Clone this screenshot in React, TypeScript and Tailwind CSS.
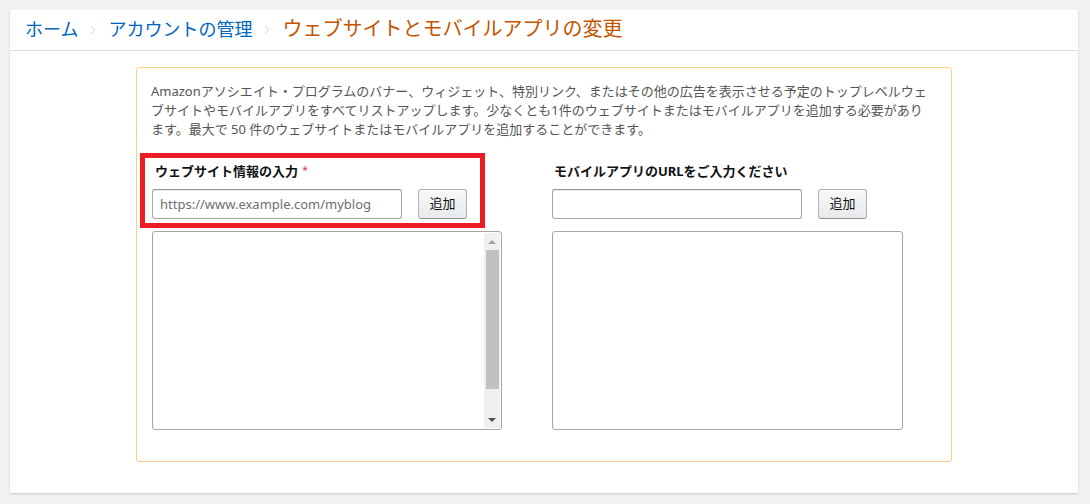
import { ChevronRight } from 'lucide-react';

const font = { fontFamily: '"Noto Sans", "Noto Sans CJK JP", sans-serif' };

const crumbs = ['ホーム', 'アカウントの管理'];

function AddRow({ placeholder }: { placeholder?: string }) {
  return (
    <div className="flex items-center gap-4 h-[30px]">
      <input
        type="text"
        placeholder={placeholder}
        className="w-[250px] h-[30px] rounded-[3px] border border-[#a6a6a6] border-t-[#949494] px-[7px] text-[13px] text-[#111] placeholder:text-[#6f6f6f] shadow-[inset_0_1px_0_rgba(0,0,0,0.07)] outline-none"
      />
      <button className="w-[49px] h-[30px] rounded-[3px] border border-[#adb1b8] border-b-[#8d9096] bg-gradient-to-b from-[#f7f8fa] to-[#e7e9ec] text-[13px] text-[#111]">
        追加
      </button>
    </div>
  );
}

export default function App() {
  return (
    <div className="min-h-[504px] bg-[#f2f2f2] pt-[10px] pl-[10px]" style={font}>
      <div className="w-[1068px] h-[483px] bg-white shadow-[0_1px_2px_rgba(0,0,0,0.18)] flex flex-col">
        {/* Breadcrumb */}
        <div className="h-[41px] border-b border-[#dddddd] flex items-center pl-[15px] pb-[2px]">
          {crumbs.map((c) => (
            <div key={c} className="flex items-center">
              <span className="text-[18px] leading-none text-[#0066c0]">{c}</span>
              <ChevronRight size={14} strokeWidth={1.5} className="text-[#cccccc] mx-[8px] mt-[2px]" />
            </div>
          ))}
          <span className="text-[20px] leading-none text-[#c45500]">ウェブサイトとモバイルアプリの変更</span>
        </div>

        {/* Body */}
        <div className="pl-[126px] pt-[16px]">
          <div className="relative w-[816px] h-[395px] border border-[#f9cf80] rounded-[3px] pt-[14px] px-[14px]">
            <p className="text-[13px] leading-[19px] text-[#555555] whitespace-nowrap">
              Amazonアソシエイト・プログラムのバナー、ウィジェット、特別リンク、またはその他の広告を表示させる予定のトップレベルウェ
              <br />
              ブサイトやモバイルアプリをすべてリストアップします。少なくとも1件のウェブサイトまたはモバイルアプリを追加する必要があり
              <br />
              ます。最大で 50 件のウェブサイトまたはモバイルアプリを追加することができます。
            </p>

            <div className="flex gap-[50px] mt-[23px] pl-[1px]">
              {/* Website column */}
              <div className="w-[350px]">
                <div className="h-[19px] pl-[3px] text-[13px] leading-[19px] font-bold text-[#111] mb-[8px] flex items-start gap-[4px]">
                  <span>ウェブサイト情報の入力</span>
                  <span className="text-[11px] leading-[16px] font-normal text-[#e0404a]">*</span>
                </div>
                <AddRow placeholder="https://www.example.com/myblog" />
                <div className="mt-[12px] h-[199px] rounded-[3px] border border-[#a6a6a6] flex justify-end p-[1px]">
                  <div className="w-[16px] bg-[#f0f0f0] flex flex-col items-center">
                    <div className="h-[17px] flex items-center justify-center">
                      <span className="block w-0 h-0 border-x-[4px] border-x-transparent border-b-[4px] border-b-[#a3a3a3]" />
                    </div>
                    <div className="w-[13px] h-[139px] bg-[#c1c1c1]" />
                    <div className="flex-1 flex items-end justify-center pb-[6px]">
                      <span className="block w-0 h-0 border-x-[4px] border-x-transparent border-t-[4px] border-t-[#505050]" />
                    </div>
                  </div>
                </div>
              </div>

              {/* Mobile app column */}
              <div className="w-[351px]">
                <div className="h-[19px] pl-[2px] text-[13px] leading-[19px] font-bold text-[#111] mb-[8px]">
                  モバイルアプリのURLをご入力ください
                </div>
                <AddRow />
                <div className="mt-[12px] h-[199px] rounded-[3px] border border-[#a6a6a6]" />
              </div>
            </div>

            {/* Annotation highlight */}
            <div className="absolute left-[3px] top-[85px] w-[345px] h-[75px] border-[5px] border-[#ec1c24]" />
          </div>
        </div>
      </div>
    </div>
  );
}
